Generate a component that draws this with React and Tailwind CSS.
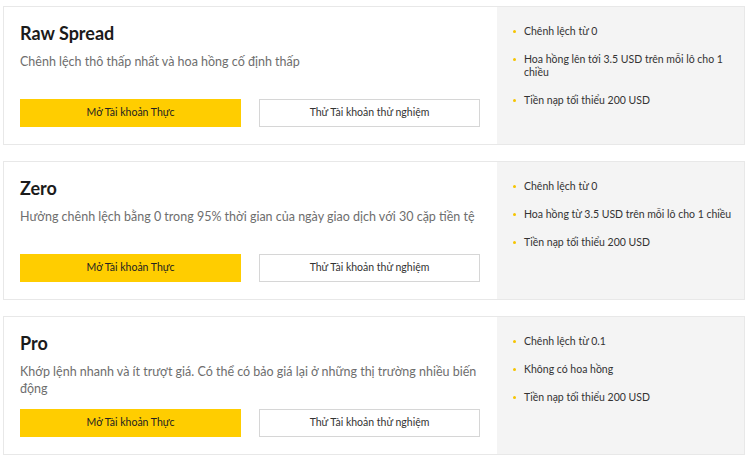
import React from 'react';

const accounts = [
  {
    name: 'Raw Spread',
    desc: 'Chênh lệch thô thấp nhất và hoa hồng cố định thấp',
    points: ['Chênh lệch từ 0', 'Hoa hồng lên tới 3.5 USD trên mỗi lô cho 1 chiều', 'Tiền nạp tối thiểu 200 USD'],
  },
  {
    name: 'Zero',
    desc: 'Hưởng chênh lệch bằng 0 trong 95% thời gian của ngày giao dịch với 30 cặp tiền tệ',
    points: ['Chênh lệch từ 0', 'Hoa hồng từ 3.5 USD trên mỗi lô cho 1 chiều', 'Tiền nạp tối thiểu 200 USD'],
  },
  {
    name: 'Pro',
    desc: 'Khớp lệnh nhanh và ít trượt giá. Có thể có bảo giá lại ở những thị trường nhiều biến động',
    points: ['Chênh lệch từ 0.1', 'Không có hoa hồng', 'Tiền nạp tối thiểu 200 USD'],
  },
];

function AccountCard({ a }) {
  return (
    <div className="flex h-[139px] border border-[#e8e8e8] bg-white">
      <div className="flex w-[493px] flex-col justify-between pl-[16px] pr-[17px] pt-[14px] pb-[17px]">
        <div>
          <h2 className="text-[18px] font-bold leading-[24px] text-[#1b1b1b]">{a.name}</h2>
          <p className="mt-[8px] text-[12.5px] leading-[17px] text-[#6e6e6e]">{a.desc}</p>
        </div>
        <div className="grid grid-cols-2 gap-[18px]">
          <button className="h-[28px] bg-[#ffcd00] text-[10.5px] text-[#222]">Mở Tài khoản Thực</button>
          <button className="h-[28px] border border-[#d6d6d6] bg-white text-[10.5px] text-[#333]">Thử Tài khoản thử nghiệm</button>
        </div>
      </div>
      <div className="flex-1 bg-[#f4f4f4] pl-[16px] pr-[10px] pt-[18px]">
        <ul className="flex flex-col gap-[15px]">
          {a.points.map((p) => (
            <li key={p} className="flex text-[10.5px] leading-[13px] text-[#333]">
              <span className="mr-[8px] mt-[5px] h-[3px] w-[3px] shrink-0 rounded-full bg-[#f5c400]"></span>
              <span>{p}</span>
            </li>
          ))}
        </ul>
      </div>
    </div>
  );
}

export default function App() {
  return (
    <div className="min-h-[459px] bg-white px-[3px] pt-[6px]" style={{ fontFamily: 'Lato, sans-serif' }}>
      <div className="flex w-[742px] flex-col gap-[16px]">
        {accounts.map((a) => (
          <AccountCard key={a.name} a={a} />
        ))}
      </div>
    </div>
  );
}
